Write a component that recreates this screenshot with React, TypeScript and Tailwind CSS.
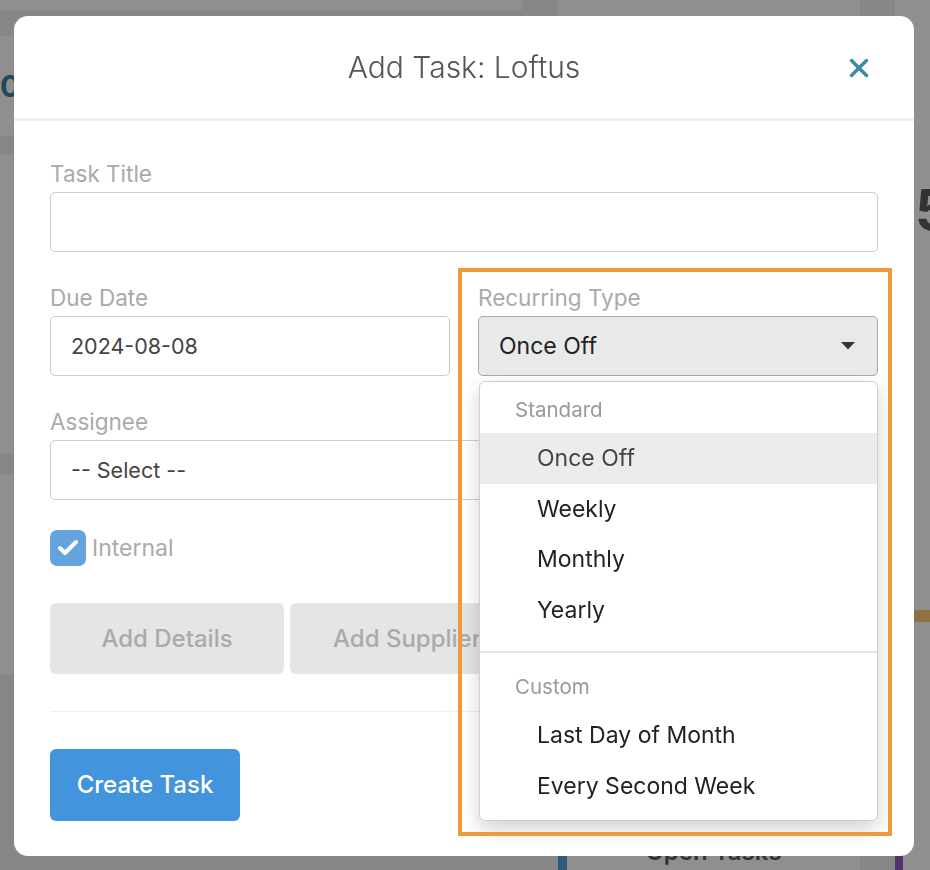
import React from 'react';
import { X, Check } from 'lucide-react';

const font = { fontFamily: 'Inter, "Noto Sans", sans-serif' };

const Background: React.FC = () => (
  <div className="flex h-[870px] overflow-hidden bg-[#f0f0f0]">
    <div className="flex w-[522px] shrink-0 flex-col">
      <div className="h-[10px] bg-white" />
      <div className="h-[26px]" />
      <div className="flex h-[100px] items-center bg-white pl-[0px] text-[30px] font-bold tracking-[-8px] text-[#3684a4]">
        02
      </div>
      <div className="h-[18px]" />
      <div className="h-[300px] bg-white" />
      <div className="h-[20px]" />
      <div className="h-[200px] bg-white" />
    </div>
    <div className="w-[36px] shrink-0" />
    <div className="flex w-[302px] shrink-0 flex-col">
      <div className="h-[830px] bg-white" />
      <div className="h-[15px]" />
      <div className="flex flex-1 border-l-[9px] border-[#54a1d6] bg-white">
        <div className="flex-1 pt-[6px] text-center text-[24px] font-semibold text-[#5b5b5b]">Open Tasks</div>
      </div>
    </div>
    <div className="w-[35px] shrink-0" />
    <div className="flex min-w-0 flex-1 flex-col overflow-hidden">
      <div className="h-[150px] bg-white" />
      <div className="flex h-[120px] items-center whitespace-nowrap bg-white pl-[20px] text-[56px] font-bold text-[#5b5b5b]">53</div>
      <div className="h-[340px] bg-white" />
      <div className="h-[12px] bg-[#ffc872]" />
      <div className="h-[223px] bg-white" />
      <div className="flex-1 border-l-[8px] border-[#8d5dc8] bg-white" />
    </div>
  </div>
);

const Label: React.FC<{ children: React.ReactNode }> = ({ children }) => (
  <div className="mb-[5px] h-[26px] text-[22.5px] leading-[26px] text-[#aaaaaa]">{children}</div>
);

const Option: React.FC<{ label: string; active?: boolean }> = ({ label, active }) => (
  <div className={`flex h-[50.5px] items-center pl-[57px] text-[23px] ${active ? 'bg-[#ececec] text-[#444]' : 'text-[#222]'}`}>
    {label}
  </div>
);

export default function App() {
  return (
    <div className="relative h-[870px] w-[930px] overflow-hidden" style={font}>
      <Background />
      <div className="fixed inset-0 bg-black/[0.44]" />
      <div className="fixed inset-0 pl-[14px] pt-[16px]">
        <div className="relative h-[840px] w-[900px] rounded-[14px] bg-white">
          <div className="relative flex h-[105px] items-center justify-center border-b-[3px] border-[#efefef]">
            <h2 className="text-[30px] font-light text-[#555555]">Add Task: Loftus</h2>
            <button className="absolute right-[40px] top-[37px] text-[#3b8aa6]">
              <X className="h-[30px] w-[30px]" strokeWidth={2.75} />
            </button>
          </div>

          <div className="px-[36px] pt-[40px]">
            <Label>Task Title</Label>
            <div className="h-[60px] rounded-[5px] border border-[#cccccc]" />

            <div className="mt-[33px] grid grid-cols-2 gap-[28px]">
              <div>
                <Label>Due Date</Label>
                <div className="flex h-[60px] items-center rounded-[5px] border border-[#cccccc] pl-[20px] text-[21.5px] text-[#444]">
                  2024-08-08
                </div>
              </div>
              <div className="relative">
                <Label>Recurring Type</Label>
                <div className="flex h-[60px] items-center justify-between rounded-[5px] border border-[#a8a8a8] bg-[#e9e9e9] pl-[20px] pr-[22px] text-[23px] text-[#222]">
                  <span>Once Off</span>
                  <svg width="14" height="8" viewBox="0 0 14 8">
                    <path d="M0 0h14L7 7.5z" fill="#333" />
                  </svg>
                </div>
                <div className="absolute left-[1px] right-0 top-[96px] z-10 rounded-[6px] border border-[#d0d0d0] bg-white pb-[9px] shadow-[0_8px_20px_rgba(0,0,0,0.18)]">
                  <div className="flex h-[51px] items-center pl-[35px] pt-[6px] text-[20.5px] text-[#999]">Standard</div>
                  <Option label="Once Off" active />
                  <Option label="Weekly" />
                  <Option label="Monthly" />
                  <Option label="Yearly" />
                  <div className="mt-[16px] border-t-2 border-[#e6e6e6]" />
                  <div className="flex h-[57px] items-center pl-[35px] pt-[12px] text-[20.5px] text-[#999]">Custom</div>
                  <Option label="Last Day of Month" />
                  <Option label="Every Second Week" />
                </div>
              </div>
            </div>

            <div className="mt-[33px]">
              <Label>Assignee</Label>
              <div className="flex h-[60px] items-center rounded-[5px] border border-[#cccccc] pl-[20px] text-[21.5px] text-[#444]">
                -- Select --
              </div>
            </div>

            <label className="mt-[30px] flex items-center gap-[6px]">
              <span className="flex h-[36px] w-[36px] items-center justify-center rounded-[7px] bg-[#64a3db]">
                <Check className="h-[24px] w-[24px] text-white" strokeWidth={4} />
              </span>
              <span className="text-[23px] text-[#aaaaaa]">Internal</span>
            </label>

            <div className="mt-[37px] flex gap-[6px]">
              <button className="h-[71px] w-[234px] rounded-[6px] bg-[#e5e5e5] text-[24px] font-medium text-[#aaaaaa]">Add Details</button>
              <button className="h-[71px] w-[234px] rounded-[6px] bg-[#e5e5e5] text-[24px] font-medium text-[#aaaaaa]">Add Supplier</button>
              <button className="h-[71px] w-[234px] rounded-[6px] bg-[#e5e5e5] text-[24px] font-medium text-[#aaaaaa]">Add Notes</button>
            </div>

            <div className="mt-[37px] border-t border-[#eeeeee]" />

            <button className="mt-[37px] h-[72px] w-[190px] rounded-[6px] bg-[#4294dc] text-[24px] font-medium text-white">
              Create Task
            </button>
          </div>

          <div className="pointer-events-none absolute left-[444px] top-[252px] z-20 h-[568px] w-[434px] border-4 border-[#f0993a]" />
        </div>
      </div>
    </div>
  );
}
